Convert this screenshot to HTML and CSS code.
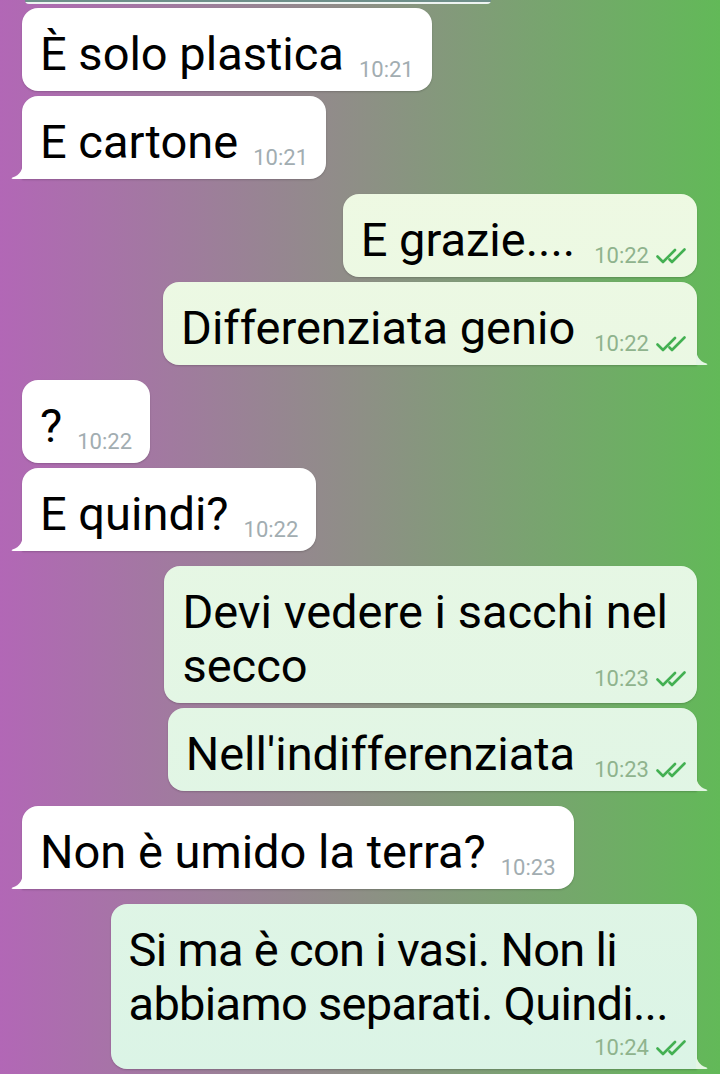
FILE: index.html
```html
<!DOCTYPE html>
<html lang="it">
<head>
    <meta charset="UTF-8">
    <meta name="viewport" content="width=device-width, initial-scale=1.0">
    <title>Chat</title>
    <link rel="stylesheet" href="styles.css">
</head>
<body>
    <div class="chat">
        <div class="prev"></div>

        <div class="msg in first">
            <span class="text">È solo plastica</span>
            <span class="meta"><span class="time">10:21</span></span>
        </div>
        <div class="msg in tailed">
            <span class="text">E cartone</span>
            <span class="meta"><span class="time">10:21</span></span>
            <svg class="tail" viewBox="0 0 12 18"><path d="M12 0 C12 9 9 14 1.5 16.5 C0 17 0.5 18 2 18 L12 18 Z"/></svg>
        </div>

        <div class="msg out group">
            <span class="text">E grazie....</span>
            <span class="meta"><span class="time">10:22</span><svg class="checks" viewBox="0 0 30 16"><path d="M1.5 8.5 L7 14 L19 2 M13.5 11.5 L16 14 L28.5 1.5"/></svg></span>
        </div>
        <div class="msg out tailed">
            <span class="text">Differenziata genio</span>
            <span class="meta"><span class="time">10:22</span><svg class="checks" viewBox="0 0 30 16"><path d="M1.5 8.5 L7 14 L19 2 M13.5 11.5 L16 14 L28.5 1.5"/></svg></span>
            <svg class="tail" viewBox="0 0 12 18"><path d="M12 0 C12 9 9 14 1.5 16.5 C0 17 0.5 18 2 18 L12 18 Z"/></svg>
        </div>

        <div class="msg in group">
            <span class="text">?</span>
            <span class="meta"><span class="time">10:22</span></span>
        </div>
        <div class="msg in tailed">
            <span class="text">E quindi?</span>
            <span class="meta"><span class="time">10:22</span></span>
            <svg class="tail" viewBox="0 0 12 18"><path d="M12 0 C12 9 9 14 1.5 16.5 C0 17 0.5 18 2 18 L12 18 Z"/></svg>
        </div>

        <div class="msg out group wrap">
            <span class="text">Devi vedere i sacchi nel<br>secco</span>
            <span class="meta"><span class="time">10:23</span><svg class="checks" viewBox="0 0 30 16"><path d="M1.5 8.5 L7 14 L19 2 M13.5 11.5 L16 14 L28.5 1.5"/></svg></span>
        </div>
        <div class="msg out tailed">
            <span class="text">Nell'indifferenziata</span>
            <span class="meta"><span class="time">10:23</span><svg class="checks" viewBox="0 0 30 16"><path d="M1.5 8.5 L7 14 L19 2 M13.5 11.5 L16 14 L28.5 1.5"/></svg></span>
            <svg class="tail" viewBox="0 0 12 18"><path d="M12 0 C12 9 9 14 1.5 16.5 C0 17 0.5 18 2 18 L12 18 Z"/></svg>
        </div>

        <div class="msg in group tailed">
            <span class="text">Non è umido la terra?</span>
            <span class="meta"><span class="time">10:23</span></span>
            <svg class="tail" viewBox="0 0 12 18"><path d="M12 0 C12 9 9 14 1.5 16.5 C0 17 0.5 18 2 18 L12 18 Z"/></svg>
        </div>

        <div class="msg out group tall tailed">
            <span class="text narrow">Si ma è con i vasi. Non li<br>abbiamo separati. Quindi...</span>
            <span class="meta"><span class="time">10:24</span><svg class="checks" viewBox="0 0 30 16"><path d="M1.5 8.5 L7 14 L19 2 M13.5 11.5 L16 14 L28.5 1.5"/></svg></span>
            <svg class="tail" viewBox="0 0 12 18"><path d="M12 0 C12 9 9 14 1.5 16.5 C0 17 0.5 18 2 18 L12 18 Z"/></svg>
        </div>
    </div>
</body>
</html>
```

FILE: styles.css
```css
body {
    margin: 0;
    height: 1074px;
    overflow: hidden;
    font-family: 'Roboto', 'Liberation Sans', sans-serif;
    color: #000;
    background: linear-gradient(90deg, #b267b6 0%, #8e8f86 50%, #62b958 100%);
}

.chat {
    display: flex;
    flex-direction: column;
    padding: 0 23px 0 22px;
}

.prev {
    width: 466px;
    height: 4px;
    margin-left: 3px;
    border-radius: 0 0 14px 14px;
    background: linear-gradient(#6f8f8a 40%, #eef4f2 40%);
}

.msg {
    position: relative;
    display: flex;
    align-items: flex-end;
    margin-top: 5px;
    padding: 19px 18px 10px;
    border-radius: 16px;
    font-size: 47px;
    line-height: 54px;
    box-shadow: 0 1px 2px rgba(0, 0, 0, 0.18);
}

.msg.first {
    margin-top: 4px;
}

.msg.group {
    margin-top: 15px;
}

.in {
    align-self: flex-start;
    background: #fff;
}

.out {
    align-self: flex-end;
    padding-right: 11px;
    background: linear-gradient(#f2fae2, #dbf4e6) fixed;
}

.in.tailed {
    border-bottom-left-radius: 0;
}

.out.tailed {
    border-bottom-right-radius: 0;
}

.text {
    white-space: nowrap;
}

.text.narrow {
    letter-spacing: -0.7px;
}

.meta {
    display: flex;
    align-items: center;
    margin-left: 15px;
    font-size: 22px;
    line-height: 22px;
    color: #a2adb1;
    white-space: nowrap;
}

.out .meta {
    margin-left: 19px;
    color: #8fb38d;
}

.checks {
    width: 30px;
    height: 16px;
    margin-left: 7px;
    fill: none;
    stroke: #43b052;
    stroke-width: 2.6;
    stroke-linecap: round;
    stroke-linejoin: round;
}

/* multi-line bubbles keep extra room on the right */
.out.wrap,
.out.tall {
    padding-right: 29px;
}

/* meta sits inside the free space of the last line */
.msg.wrap {
    display: grid;
}

.msg.wrap > .text,
.msg.wrap > .meta {
    grid-area: 1 / 1;
}

.msg.wrap > .meta {
    align-self: end;
    justify-self: end;
    margin-right: -18px;
    margin-bottom: 3px;
}

/* meta on its own row */
.msg.tall {
    flex-direction: column;
    align-items: stretch;
}

.msg.tall > .meta {
    align-self: flex-end;
    margin-top: 6px;
    margin-right: -18px;
}

.tail {
    position: absolute;
    bottom: 0;
    width: 12px;
    height: 18px;
}

.in .tail {
    left: -11px;
    fill: #fff;
}

.out .tail {
    right: -11px;
    transform: scaleX(-1);
    fill: #e4f6e4;
}
```
